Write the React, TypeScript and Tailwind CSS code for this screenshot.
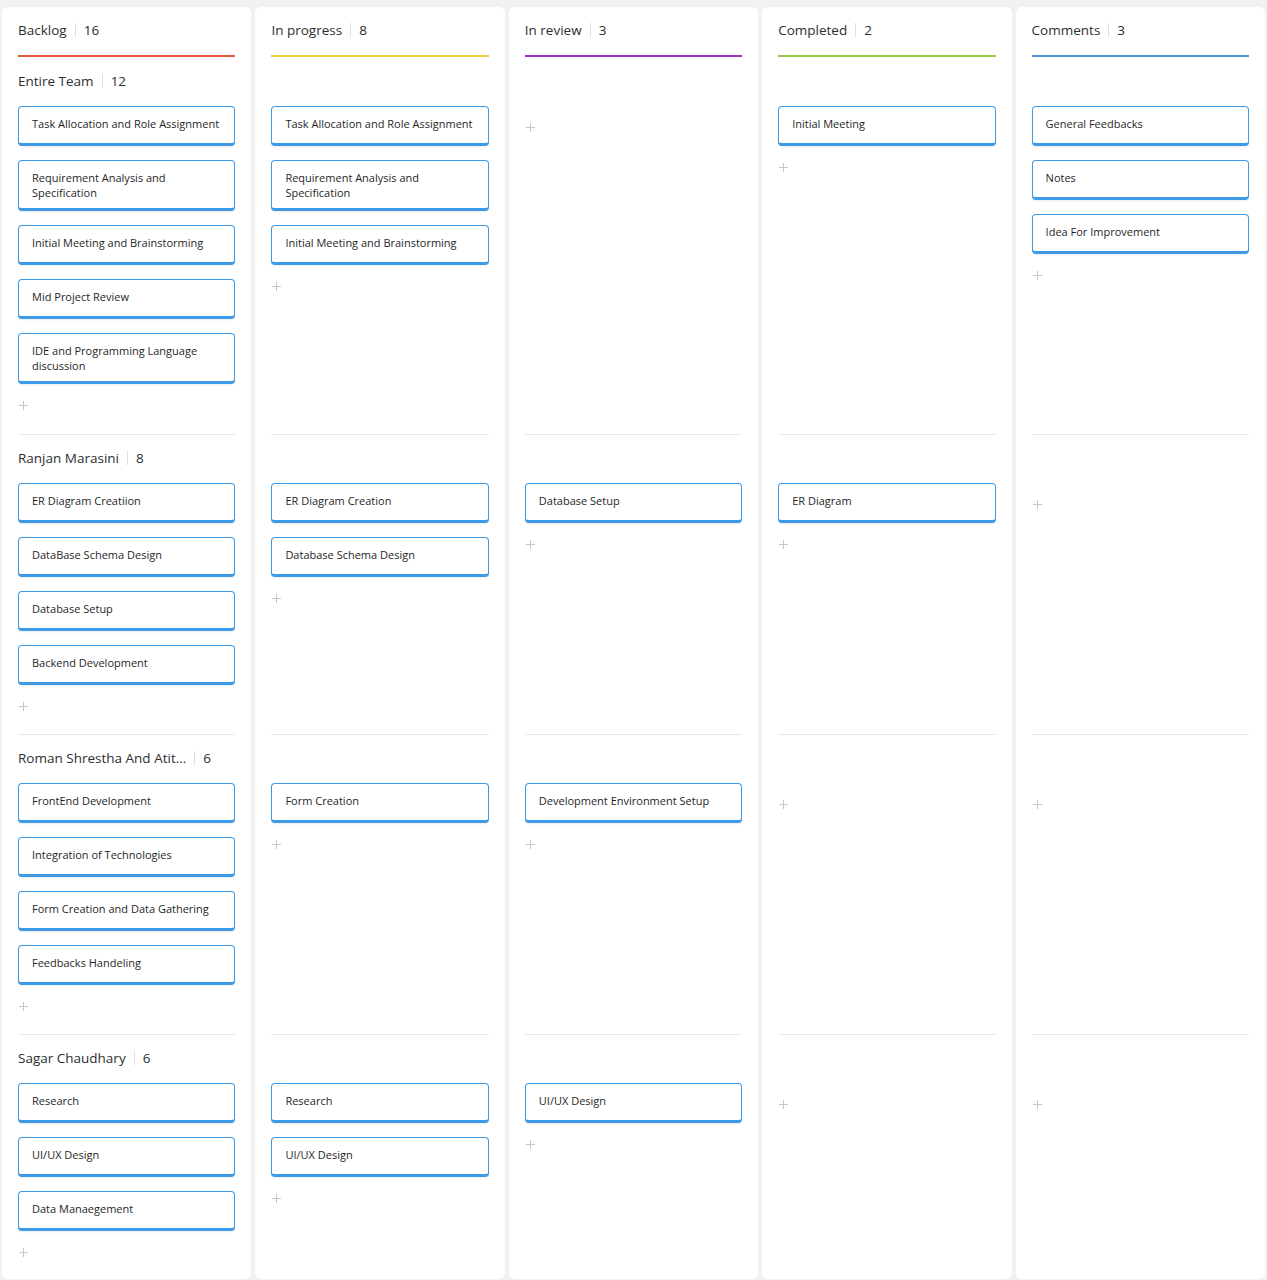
import React from "react";

type Col = { title: string; count: number; color: string };

const columns: Col[] = [
  { title: "Backlog", count: 16, color: "bg-[#e5573f]" },
  { title: "In progress", count: 8, color: "bg-[#e9d244]" },
  { title: "In review", count: 3, color: "bg-[#a42fc2]" },
  { title: "Completed", count: 2, color: "bg-[#9dc746]" },
  { title: "Comments", count: 3, color: "bg-[#4b97da]" },
];

type Group = { name: string; count: number; cards: string[][] };

const groups: Group[] = [
  {
    name: "Entire Team",
    count: 12,
    cards: [
      [
        "Task Allocation and Role Assignment",
        "Requirement Analysis and Specification",
        "Initial Meeting and Brainstorming",
        "Mid Project Review",
        "IDE and Programming Language discussion",
      ],
      [
        "Task Allocation and Role Assignment",
        "Requirement Analysis and Specification",
        "Initial Meeting and Brainstorming",
      ],
      [],
      ["Initial Meeting"],
      ["General Feedbacks", "Notes", "Idea For Improvement"],
    ],
  },
  {
    name: "Ranjan Marasini",
    count: 8,
    cards: [
      ["ER Diagram Creatiion", "DataBase Schema Design", "Database Setup", "Backend Development"],
      ["ER Diagram Creation", "Database Schema Design"],
      ["Database Setup"],
      ["ER Diagram"],
      [],
    ],
  },
  {
    name: "Roman Shrestha And Atit...",
    count: 6,
    cards: [
      [
        "FrontEnd Development",
        "Integration of Technologies",
        "Form Creation and Data Gathering",
        "Feedbacks Handeling",
      ],
      ["Form Creation"],
      ["Development Environment Setup"],
      [],
      [],
    ],
  },
  {
    name: "Sagar Chaudhary",
    count: 6,
    cards: [
      ["Research", "UI/UX Design", "Data Manaegement"],
      ["Research", "UI/UX Design"],
      ["UI/UX Design"],
      [],
      [],
    ],
  },
];

function Label({ text, count }: { text: string; count: number }) {
  return (
    <div className="flex items-center whitespace-nowrap text-[13.5px] text-[#2e2e2e]">
      <span>{text}</span>
      <span className="mx-[8px] inline-block h-[14px] w-px bg-[#dedede]" />
      <span>{count}</span>
    </div>
  );
}

function Plus() {
  return (
    <div className="mt-[11px] flex h-5 items-center">
      <svg width="9" height="9" viewBox="0 0 9 9" className="ml-px">
        <line x1="4.5" y1="0" x2="4.5" y2="9" stroke="#c6c6c6" strokeWidth="1" />
        <line x1="0" y1="4.5" x2="9" y2="4.5" stroke="#c6c6c6" strokeWidth="1" />
      </svg>
    </div>
  );
}

function Card({ text }: { text: string }) {
  return (
    <div className="min-h-[40px] rounded-[4px] border border-b-[3px] border-[#3d9ae6] bg-white pb-[8px] pl-[13px] pr-2 pt-[9px] text-[11px] leading-[15px] text-[#1f1f1f] shadow-[0_1px_2px_rgba(0,0,0,0.08)]">
      {text}
    </div>
  );
}

export default function App() {
  return (
    <div className="min-h-screen bg-[#f1f1f1] px-[2px] pb-[2px] pt-[7px] font-['Open_Sans',sans-serif]">
      <div className="grid grid-cols-5 gap-x-[4px]">
        {columns.map((c) => (
          <div key={c.title} className="rounded-t-[6px] bg-white px-4 pt-[12px]">
            <div className="flex h-[22px] items-center">
              <Label text={c.title} count={c.count} />
            </div>
            <div className={`mt-[14px] h-[2px] ${c.color}`} />
          </div>
        ))}
        {groups.map((g, gi) =>
          columns.map((c, ci) => {
            const last = gi === groups.length - 1;
            const pb = last ? "rounded-b-[6px] pb-[17px]" : gi === 0 ? "pb-[19px]" : "pb-[18px]";
            return (
              <div key={`${gi}-${ci}`} className={`bg-white px-4 ${pb}`}>
                {gi > 0 && <div className="h-px bg-[#e8e8e8]" />}
                <div className={gi > 0 ? "pt-[11px]" : "pt-[12px]"}>
                  <div className="flex h-6 items-center">
                    {ci === 0 && <Label text={g.name} count={g.count} />}
                  </div>
                  <div className="mt-[13px] flex flex-col gap-[14px]">
                    {g.cards[ci].map((t, i) => (
                      <Card key={i} text={t} />
                    ))}
                  </div>
                  <Plus />
                </div>
              </div>
            );
          })
        )}
      </div>
    </div>
  );
}
